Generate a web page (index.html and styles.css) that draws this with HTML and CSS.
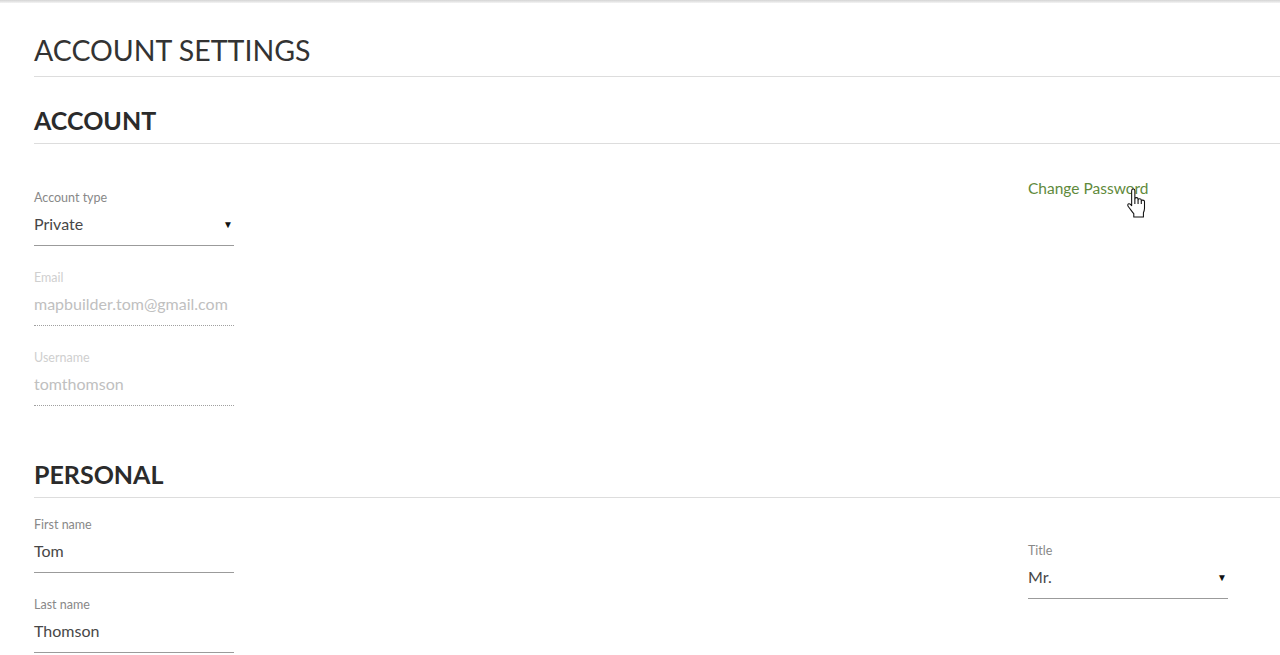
FILE: index.html
```html
<!DOCTYPE html>
<html lang="en">
<head>
    <meta charset="UTF-8">
    <meta name="viewport" content="width=device-width, initial-scale=1.0">
    <title>Account Settings</title>
    <link rel="stylesheet" href="styles.css">
</head>
<body>
    <div class="top-bar"></div>
    <div class="settings-page">
        <h1 class="page-title">ACCOUNT SETTINGS</h1>

        <!-- Account section -->
        <h2 class="section-title">ACCOUNT</h2>
        <div class="section-body account-body">
            <div class="col-left">
                <div class="field">
                    <label>Account type</label>
                    <div class="value select">Private<span class="caret">&#9660;</span></div>
                </div>
                <div class="field disabled">
                    <label>Email</label>
                    <div class="value">mapbuilder.tom@gmail.com</div>
                </div>
                <div class="field disabled">
                    <label>Username</label>
                    <div class="value">tomthomson</div>
                </div>
            </div>
            <div class="col-right">
                <a class="link" href="#">Change Password</a>
                <!-- mouse pointer hovering the link -->
                <svg class="cursor" width="22" height="30" viewBox="0 0 20 28">
                    <path d="M5 2.5C5 1.5 5.8 1 6.5 1S8 1.5 8 2.5V10C8 9.3 8.6 9 9.5 9S11 9.5 11 10.3V11C11 10.3 11.6 10 12.3 10S14 10.5 14 11.3V12C14 11.6 14.6 11.3 15.3 11.3S17 11.8 17 12.6V19C17 21 16.5 22 16 23V27H7V24C6 23 4 20 2 17.5C1 16.3 1.3 15 2.3 14.7S4 15 5 16.5Z"
                          fill="#fff" stroke="#111" stroke-width="1" stroke-linejoin="round"/>
                    <path d="M8 10V15M11 11V15M14 12V15" stroke="#111" stroke-width="1" fill="none"/>
                </svg>
            </div>
        </div>

        <!-- Personal section -->
        <h2 class="section-title">PERSONAL</h2>
        <div class="section-body personal-body">
            <div class="col-left">
                <div class="field">
                    <label>First name</label>
                    <div class="value">Tom</div>
                </div>
                <div class="field">
                    <label>Last name</label>
                    <div class="value">Thomson</div>
                </div>
            </div>
            <div class="col-right title-col">
                <div class="field">
                    <label>Title</label>
                    <div class="value select">Mr.<span class="caret">&#9660;</span></div>
                </div>
            </div>
        </div>
    </div>
</body>
</html>
```

FILE: styles.css
```css
body {
    margin: 0;
    font-family: Lato, "Open Sans", sans-serif;
    background-color: #ffffff;
    color: #444;
    overflow: hidden;
}
.top-bar {
    height: 3px;
    background: linear-gradient(#d4d4d4, #f4f4f4);
}
.settings-page {
    padding-left: 34px;
}
.page-title {
    margin: 0;
    padding-top: 30px;
    padding-bottom: 9px;
    font-size: 28.5px;
    font-weight: 400;
    line-height: 34px;
    color: #333;
    border-bottom: 1px solid #ddd;
}
.section-title {
    margin: 0;
    padding-top: 28px;
    padding-bottom: 8px;
    font-size: 25px;
    font-weight: 700;
    line-height: 30px;
    color: #2b2b2b;
    border-bottom: 1px solid #ddd;
}
.section-body {
    display: grid;
    grid-template-columns: 1fr 252px;
}
.account-body {
    padding-top: 46px;
    padding-bottom: 25px;
}
.personal-body {
    padding-top: 19px;
}
.col-left {
    display: flex;
    flex-direction: column;
    gap: 24px;
}
.field {
    width: 200px;
}
.field label {
    display: block;
    font-size: 12.5px;
    line-height: 16px;
    color: #888;
}
.field .value {
    display: flex;
    justify-content: space-between;
    align-items: center;
    margin-top: 9px;
    padding-bottom: 12px;
    font-size: 16px;
    line-height: 18px;
    color: #474747;
    border-bottom: 1px solid #9b9b9b;
}
.field.disabled label {
    color: #cfcfcf;
}
.field.disabled .value {
    color: #c0c0c0;
    border-bottom: 1px dotted #a0a0a0;
}
.caret {
    font-size: 10px;
    color: #111;
    margin-right: 1px;
}
.col-right {
    position: relative;
}
.link {
    display: block;
    margin-top: -11px;
    font-size: 15.5px;
    line-height: 18px;
    color: #5f8a3c;
    text-decoration: none;
}
.cursor {
    position: absolute;
    left: 98px;
    top: -2px;
}
.title-col {
    padding-top: 26px;
}
```
